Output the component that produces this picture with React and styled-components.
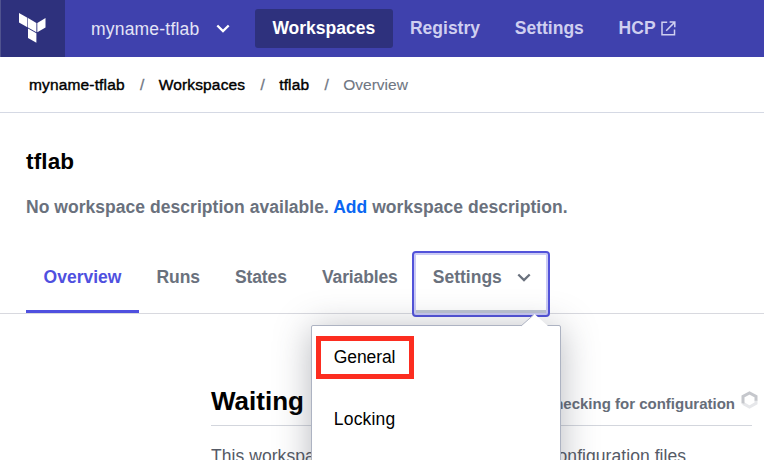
import React from "react";
import styled, { createGlobalStyle } from "styled-components";

const GlobalStyle = createGlobalStyle`
  * { box-sizing: border-box; }
  body {
    margin: 0;
    background: #fff;
    color: #000;
    font-family: "Liberation Sans", Arial, Helvetica, sans-serif;
    overflow: hidden;
  }
`;

const Page = styled.div`
  width: 764px;
  height: 460px;
  overflow: hidden;
`;

const TopBar = styled.header`
  display: flex;
  align-items: center;
  height: 57px;
  background: #3f41ad;
`;

const LogoBox = styled.div`
  width: 65px;
  height: 57px;
  padding: 13px 0 0 18px;
  background: #2e317d;
  border-left: 1px solid #50538f;
`;

const OrgSwitch = styled.div`
  display: flex;
  align-items: center;
  width: 190px;
  padding-left: 26px;
  color: #e4e4f6;
  font-size: 17.5px;
  line-height: 24px;
  letter-spacing: 0.2px;

  svg { margin-left: 17px; }
`;

const TopLink = styled.a`
  display: flex;
  align-items: center;
  height: 39px;
  padding: 0 17.4px;
  border-radius: 3px;
  font-size: 17.5px;
  font-weight: 700;
  color: ${(p) => (p.$active ? "#fff" : "#cfcff0")};
  background: ${(p) => (p.$active ? "#2e317d" : "transparent")};

  svg { margin-left: 5px; }
`;

const Crumbs = styled.nav`
  display: flex;
  align-items: center;
  height: 56px;
  padding: 1px 0 0 29px;
  border-bottom: 1px solid #d5d9e4;
  font-size: 15.5px;
`;

const Crumb = styled.span`
  color: ${(p) => (p.$current ? "#6f7682" : "#000")};
  letter-spacing: ${(p) => (p.$current ? "0" : "0.15px")};
  -webkit-text-stroke: ${(p) => (p.$current ? "0.1px #6f7682" : "0.4px #000")};
`;

const Slash = styled.span`
  width: 34px;
  padding-left: 1px;
  text-align: center;
  color: #6f7682;
  -webkit-text-stroke: 0.3px #6f7682;
`;

const Heading = styled.div`
  height: 127px;
  padding: 36px 0 0 26px;
`;

const Title = styled.h1`
  margin: 0;
  font-size: 22.5px;
  line-height: 26px;
  letter-spacing: 0.15px;
`;

const Description = styled.p`
  margin: 22px 0 0;
  font-size: 17.5px;
  line-height: 20px;
  font-weight: 700;
  letter-spacing: 0.04px;
  color: #6a717d;
  white-space: nowrap;
`;

const AddLink = styled.a`
  color: #0a67f2;
`;

const Tabs = styled.nav`
  display: flex;
  height: 74px;
  padding-left: 26px;
  border-bottom: 1px solid #d8d9df;
`;

const Tab = styled.a`
  height: 73px;
  padding: 26px 17.6px 0;
  border-bottom: 3px solid ${(p) => (p.$active ? "#4f50df" : "transparent")};
  font-size: 17.5px;
  line-height: 22px;
  font-weight: 700;
  letter-spacing: ${(p) => (p.$active ? "0" : "-0.13px")};
  color: ${(p) => (p.$active ? "#4f50df" : "#6a717d")};
`;

const SettingsTab = styled.div`
  position: relative;
  width: 138px;
  height: 66px;
  margin: 11px 0 0 -3.5px;
  padding: 11px 0 0 17px;
  border: 2px solid #5253da;
  border-radius: 4px;
  background: #fff;
  box-shadow: inset 0 0 0 2px #cbcbf5, inset 0 -5px 0 #bec5d3;
`;

const SettingsLabel = styled.div`
  display: flex;
  align-items: center;
  gap: 15px;
  padding-left: 2px;
  font-size: 17.5px;
  line-height: 26px;
  font-weight: 700;
  color: #6a717d;
`;

const Menu = styled.div`
  position: absolute;
  z-index: 2;
  top: 72px;
  left: -103px;
  width: 250px;
  height: 220px;
  padding: 10px 4px;
  background: #fff;
  border: 1px solid #adb3c2;
  border-radius: 2px;
  box-shadow: 0 4px 36px rgba(55, 61, 75, 0.36);
`;

const MenuArrow = styled.svg`
  position: absolute;
  top: -12px;
  left: 208px;
`;

const MenuItem = styled.a`
  display: flex;
  align-items: center;
  width: 98px;
  height: 43px;
  margin-bottom: 19px;
  padding-left: 13px;
  border: 5px solid ${(p) => (p.$marked ? "#fc2d20" : "transparent")};
  font-size: 17.5px;
  letter-spacing: ${(p) => (p.$marked ? "-0.1px" : "0.2px")};
  color: #000;
`;

const Content = styled.main`
  margin: 0 12px 0 211px;
`;

const StatusRow = styled.div`
  display: flex;
  justify-content: space-between;
  height: 112px;
  padding-top: 72px;
  border-bottom: 1px solid #d3d6dd;
  white-space: nowrap;
`;

const StatusTitle = styled.h2`
  margin: 0;
  font-size: 26px;
  line-height: 30px;
`;

const StatusNote = styled.div`
  display: flex;
  margin-right: -6px;
  font-size: 15px;
  line-height: 36px;
  font-weight: 700;
  color: #666d79;

  svg { margin: 5px 0 0 6px; }
`;

const Message = styled.p`
  margin: 19px 0 0;
  font-size: 17.5px;
  line-height: 22px;
  letter-spacing: 0.06px;
  color: #555a66;
  white-space: nowrap;
`;

const Chevron = ({ color, size = 14 }) => (
  <svg width={size} height="9" viewBox="0 0 14 9" fill="none">
    <path d="M1.3 1.5 7 7.1l5.7-5.6" stroke={color} strokeWidth="2.3" />
  </svg>
);

export default function App() {
  return (
    <Page>
      <GlobalStyle />
      <TopBar>
        <LogoBox>
          <svg width="27" height="30" viewBox="0 0 27 30" fill="#fff">
            <path d="M0 0 8.4 4.8v9.4L0 9.4Z" />
            <path d="m9 5.1 8.4 4.8v9.3L9 14.5Z" />
            <path d="M18.3 9.9 26.5 5.1v9.4l-8.2 4.7Z" />
            <path d="m9 15.5 8.4 4.8v9.4L9 24.9Z" />
          </svg>
        </LogoBox>
        <OrgSwitch>
          myname-tflab
          <Chevron color="#fff" />
        </OrgSwitch>
        <TopLink $active>Workspaces</TopLink>
        <TopLink>Registry</TopLink>
        <TopLink>Settings</TopLink>
        <TopLink>
          HCP
          <svg width="15" height="15" viewBox="0 0 15 15" fill="none" stroke="#cfcff0" strokeWidth="1.5">
            <path d="M6.2 1.2H1v12.6h12.5V8.5M8.6 1.1h5.2v5.2M13.5 1.4 5.2 9.7" />
          </svg>
        </TopLink>
      </TopBar>
      <Crumbs>
        <Crumb>myname-tflab</Crumb>
        <Slash>/</Slash>
        <Crumb>Workspaces</Crumb>
        <Slash>/</Slash>
        <Crumb>tflab</Crumb>
        <Slash>/</Slash>
        <Crumb $current>Overview</Crumb>
      </Crumbs>
      <Heading>
        <Title>tflab</Title>
        <Description>
          No workspace description available. <AddLink>Add</AddLink> workspace description.
        </Description>
      </Heading>
      <Tabs>
        <Tab $active>Overview</Tab>
        <Tab>Runs</Tab>
        <Tab>States</Tab>
        <Tab>Variables</Tab>
        <SettingsTab>
          <SettingsLabel>
            Settings
            <Chevron color="#6a717d" />
          </SettingsLabel>
          <Menu>
            <MenuArrow width="29" height="13" viewBox="0 0 29 13">
              <path d="M1 12 14.5 0 28 12v1H1Z" fill="#fff" />
              <path d="M1 12 13.5 1" stroke="#adb3c2" strokeWidth="1" />
            </MenuArrow>
            <MenuItem $marked>General</MenuItem>
            <MenuItem>Locking</MenuItem>
          </Menu>
        </SettingsTab>
      </Tabs>
      <Content>
        <StatusRow>
          <StatusTitle>Waiting</StatusTitle>
          <StatusNote>
            Checking for configuration
            <svg width="17" height="18" viewBox="0 0 17 18" fill="none" strokeWidth="3">
              <path d="M15 9.2v3.2L8.5 16 2 12.4" stroke="#e6e7ea" />
              <path d="M2 12.6V5.4L8.5 1.9 15 5.4v4.4" stroke="#c5c7cc" />
            </svg>
          </StatusNote>
        </StatusRow>
        <Message>This workspace currently has no Terraform configuration files</Message>
      </Content>
    </Page>
  );
}
